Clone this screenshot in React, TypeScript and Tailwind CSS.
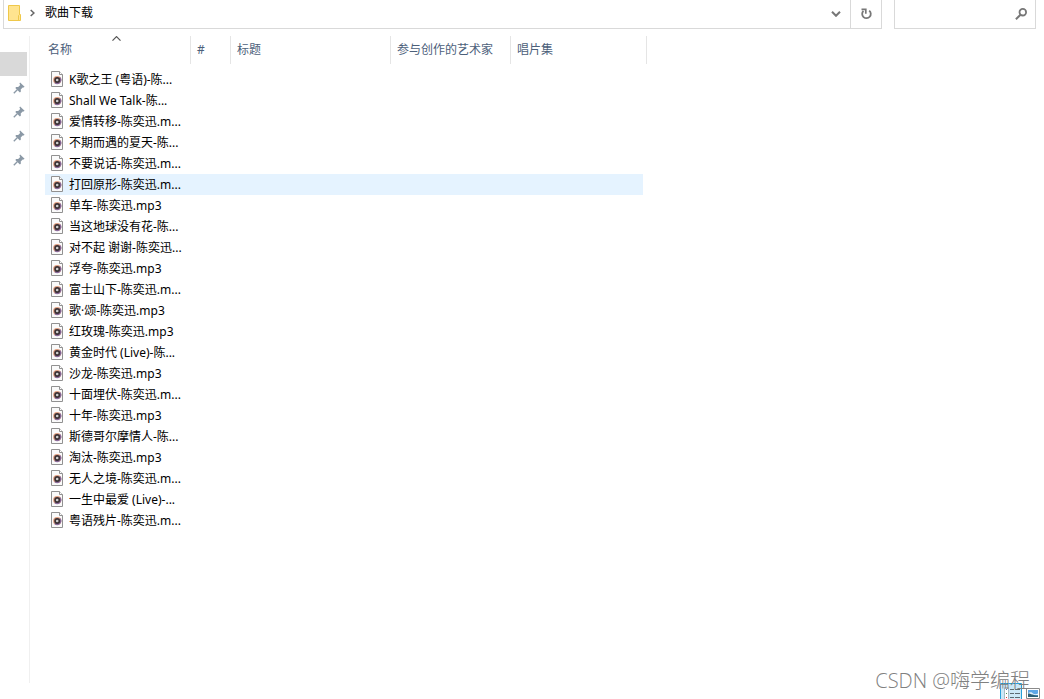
import React, { useState } from 'react';

const songs = [
  'K歌之王 (粤语)-陈...',
  'Shall We Talk-陈...',
  '爱情转移-陈奕迅.m...',
  '不期而遇的夏天-陈...',
  '不要说话-陈奕迅.m...',
  '打回原形-陈奕迅.m...',
  '单车-陈奕迅.mp3',
  '当这地球没有花-陈...',
  '对不起 谢谢-陈奕迅...',
  '浮夸-陈奕迅.mp3',
  '富士山下-陈奕迅.m...',
  '歌·颂-陈奕迅.mp3',
  '红玫瑰-陈奕迅.mp3',
  '黄金时代 (Live)-陈...',
  '沙龙-陈奕迅.mp3',
  '十面埋伏-陈奕迅.m...',
  '十年-陈奕迅.mp3',
  '斯德哥尔摩情人-陈...',
  '淘汰-陈奕迅.mp3',
  '无人之境-陈奕迅.m...',
  '一生中最爱 (Live)-...',
  '粤语残片-陈奕迅.m...',
];

const pins = ['1', '2', '3', '4'];

function FolderIcon() {
  return (
    <svg className="h-4 w-[13px]" viewBox="0 0 13 16" aria-hidden="true">
      <path d="M.5.5h11v9h1v6H.5z" fill="#ffe48f" stroke="#efc84a" />
      <path d="M10.500 15V10.500l1-1" fill="none" stroke="#efc84a" />
    </svg>
  );
}

function PinIcon() {
  return (
    <svg className="h-3 w-3" viewBox="0 0 12 12" aria-hidden="true">
      <path
        d="M6.500 1 11 5.300l-1 .9-.9-.2-2 2.100.2 2.100-1 .9L1.700 6.500l.9-.9 2 .1 2-2L5.800 2z"
        fill="#8b99a6"
        transform="translate(.6 -.6)"
      />
      <path d="M4.300 7.700.800 11.200" stroke="#8b99a6" strokeWidth="1.300" />
    </svg>
  );
}

function SongIcon() {
  return (
    <svg className="h-4 w-3 shrink-0" viewBox="0 0 12 16" aria-hidden="true">
      <path d="M.5.5h8l3 3v12H.5z" fill="#fafafa" stroke="#919191" />
      <path d="M8.500.5v3h3" fill="#fff" stroke="#919191" />
      <circle cx="6.200" cy="9" r="4.100" fill="#e2a184" />
      <path d="M3.300 11.900a4.100 4.100 0 0 0 5.800-5.800z" fill="#8a6b9c" />
      <circle cx="6.200" cy="9" r="3" fill="#3a3133" />
      <circle cx="6.200" cy="9" r="1.300" fill="#cfcfcf" />
    </svg>
  );
}

function DetailsIcon() {
  return (
    <svg className="h-4 w-[22px]" viewBox="0 0 22 16" aria-hidden="true">
      <path d="M.5 16V.5h21V16" fill="#cbe8f7" stroke="#26a0da" />
      <path d="M4 4h4v12H4z" fill="#fff" />
      <path d="M4.500 16V4.500h4V16" fill="none" stroke="#a9bcc6" />
      <path
        d="M10 6.500h4M15 6.500h5M10 10.500h4M15 10.500h5M10 14.500h4M15 14.500h5"
        stroke="#5c6b73"
      />
      <path d="M6 6.500h1" stroke="#3878c7" />
      <path d="M6 10.500h1" stroke="#3a9650" />
      <path d="M6 14.500h1" stroke="#d23a3a" />
    </svg>
  );
}

function ThumbnailIcon() {
  return (
    <svg className="h-[11px] w-[14px]" viewBox="0 0 14 11" aria-hidden="true">
      <path d="M.5.5h13v10H.5z" fill="#fff" stroke="#8a8a8a" />
      <path d="M2 2h10v7H2z" fill="#5ea6e6" />
      <path d="M2 5.500c2-2 4-1 5 0s3 1 5 0V7H2z" fill="#e3f1fb" />
      <path d="M2 5.500c3 0 5 2 10 2V9H2z" fill="#2b5f78" />
    </svg>
  );
}

function TopBar() {
  return (
    <header className="flex h-[29px] gap-3 pr-2 pl-[3px]">
      <div className="flex flex-1 border border-t-0 border-[#d9d9d9]">
        <nav className="flex flex-1 items-center pb-[3px] pl-1">
          <FolderIcon />
          <svg
            className="ml-[9px] h-2 w-[5px]"
            viewBox="0 0 5 8"
            fill="none"
            stroke="#666"
            strokeWidth="1.500"
            aria-hidden="true"
          >
            <path d="M.7 1 3.900 4 .7 7" />
          </svg>
          <a href="#" className="ml-[10px] text-black">
            歌曲下载
          </a>
        </nav>
        <button type="button" aria-label="历史记录" className="flex w-7 items-center justify-center">
          <svg
            className="h-[6px] w-[10px]"
            viewBox="0 0 10 6"
            fill="none"
            stroke="#777"
            strokeWidth="2"
          >
            <path d="M1 .8l4 4 4-4" />
          </svg>
        </button>
        <button
          type="button"
          aria-label="刷新"
          className="flex w-[31px] items-center justify-center border-l border-[#d9d9d9]"
        >
          <svg className="h-3 w-3" viewBox="0 0 12 12" fill="none" stroke="#777">
            <path d="M9.200 2.600a4.300 4.300 0 1 1-5.800.3" strokeWidth="1.800" />
            <path d="M1.500 1.300h4.300v4.500" strokeWidth="1.700" />
          </svg>
        </button>
      </div>
      <div className="flex w-[142px] items-center border border-t-0 border-[#d9d9d9] pr-2">
        <input type="text" aria-label="搜索" className="min-w-0 flex-1 px-2 outline-none" />
        <svg className="h-3 w-3" viewBox="0 0 12 12" fill="none" stroke="#777" aria-hidden="true">
          <circle cx="7.800" cy="4.200" r="3.300" strokeWidth="1.800" />
          <path d="M5.500 6.700.900 11.200" strokeWidth="2" />
        </svg>
      </div>
    </header>
  );
}

function App() {
  const [selected, setSelected] = useState(5);

  return (
    <div className="relative flex h-screen flex-col overflow-hidden bg-white font-['Noto_Sans','Noto_Sans_CJK_SC',sans-serif] text-xs text-black">
      <TopBar />
      <main className="flex flex-1 pt-[7px]">
        <aside className="flex w-[30px] flex-col border-r border-[#f0f0f0] pt-4">
          <div className="mr-[2px] h-6 bg-[#d9d9d9]" />
          {pins.map((pin) => (
            <div key={pin} className="flex h-6 items-center justify-end pr-1">
              <PinIcon />
            </div>
          ))}
        </aside>
        <div className="flex-1 pl-[15px]">
          <table className="table-fixed border-separate border-spacing-0">
            <thead className="text-left text-[#4c607a]">
              <tr className="h-7">
                <th className="relative w-[146px] border-r border-[#e5e5e5] p-0 pl-[3px] font-normal">
                  <svg
                    className="absolute top-0 left-[67px] h-[5px] w-[9px]"
                    viewBox="0 0 9 5"
                    fill="none"
                    stroke="#555"
                    strokeWidth="1.200"
                    aria-hidden="true"
                  >
                    <path d="M.5 4.600l4-4 4 4" />
                  </svg>
                  名称
                </th>
                <th className="w-10 border-r border-[#e5e5e5] p-0 pl-[6px] font-normal">#</th>
                <th className="w-40 border-r border-[#e5e5e5] p-0 pl-[6px] font-normal">标题</th>
                <th className="w-[120px] border-r border-[#e5e5e5] p-0 pl-[6px] font-normal">
                  参与创作的艺术家
                </th>
                <th className="w-[136px] border-r border-[#e5e5e5] p-0 pl-[6px] font-normal">
                  唱片集
                </th>
              </tr>
            </thead>
            <tbody>
              <tr className="h-[5px]">
                <td colSpan={5} className="p-0" />
              </tr>
              {songs.map((song, index) => (
                <tr
                  key={song}
                  className={selected === index ? 'bg-[#e5f3ff]' : ''}
                  onClick={() => setSelected(index)}
                >
                  <td className="p-0">
                    <div className="flex h-[21px] items-start gap-[6px] pt-[2px] pl-[6px] leading-[18px] whitespace-nowrap">
                      <SongIcon />
                      <span>{song}</span>
                    </div>
                  </td>
                  <td className="p-0" />
                  <td className="p-0" />
                  <td className="p-0" />
                  <td className="border-r-4 border-white p-0" />
                </tr>
              ))}
            </tbody>
          </table>
        </div>
      </main>
      <footer className="flex h-4 shrink-0 items-end justify-end gap-1 pr-1">
        <button type="button" aria-label="详细信息">
          <DetailsIcon />
        </button>
        <button type="button" aria-label="大缩略图">
          <ThumbnailIcon />
        </button>
      </footer>
      <p className="pointer-events-none absolute right-[14px] bottom-1 font-['Open_Sans','Noto_Sans_CJK_SC',sans-serif] text-xl leading-7 font-light text-[#808080]">
        CSDN @嗨学编程
      </p>
    </div>
  );
}

export default App;
